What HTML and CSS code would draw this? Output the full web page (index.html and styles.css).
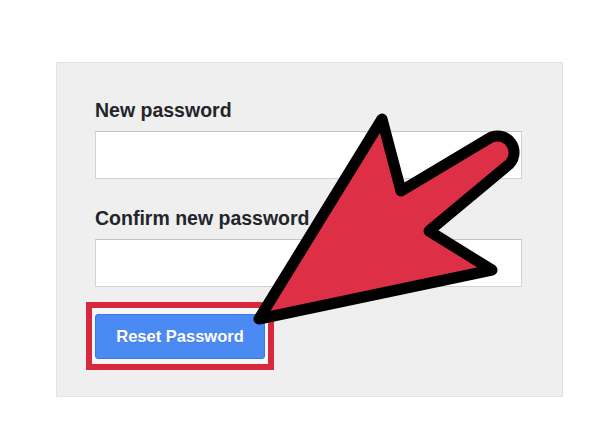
FILE: index.html
```html
<!DOCTYPE html>
<html lang="en">
<head>
    <meta charset="UTF-8">
    <meta name="viewport" content="width=device-width, initial-scale=1.0">
    <title>Reset Password</title>
    <link rel="stylesheet" href="styles.css">
</head>
<body>
    <div class="card">
        <label class="field-label" for="new_password">New password</label>
        <input class="field" type="password" id="new_password">

        <label class="field-label second" for="confirm_password">Confirm new password</label>
        <input class="field" type="password" id="confirm_password">

        <div class="highlight">
            <button class="btn">Reset Password</button>
        </div>
    </div>

    <!-- big pointer arrow drawn over the form -->
    <svg class="pointer" width="600" height="433" viewBox="0 0 600 433">
        <path d="M259 319 L382 119 L401 191 L488 139 A16 16 0 0 1 507 166 L429 231 L492 270 Z"
              fill="#dd2f46" stroke="#000" stroke-width="11" stroke-linejoin="round"/>
    </svg>
</body>
</html>
```
FILE: styles.css
```css
body {
    margin: 0;
    background: #fff;
    font-family: 'Liberation Sans', Arial, sans-serif;
    position: relative;
    width: 600px;
    height: 433px;
    overflow: hidden;
}

.card {
    box-sizing: border-box;
    width: 507px;
    height: 335px;
    margin: 62px 0 0 56px;
    padding: 35px 40px 25px 38px;
    background: #efefef;
    border: 1px solid #e2e2e2;
}

.field-label {
    display: block;
    font-size: 19.5px;
    line-height: 24px;
    font-weight: bold;
    color: #22252a;
    margin-bottom: 9px;
}

.field-label.second {
    margin-top: 27px;
}

.field {
    display: block;
    box-sizing: border-box;
    width: 427px;
    height: 48px;
    margin: 0;
    background: #fff;
    border: 1px solid #d2d2d2;
    border-top-color: #c4c4c4;
}

.highlight {
    width: fit-content;
    margin: 15px 0 0 -9px;
    padding: 6px 3px 5px 3px;
    border: 6px solid #d8283d;
    background: #f6f6f6;
}

.btn {
    display: block;
    box-sizing: border-box;
    width: 170px;
    height: 45px;
    padding: 0;
    background: #4a8af2;
    border: 1px solid #3b79e2;
    border-radius: 3px;
    color: #fff;
    font-family: 'Liberation Sans', Arial, sans-serif;
    font-size: 16.5px;
    font-weight: bold;
    text-shadow: 0 1px 0 rgba(0,0,0,0.1);
    cursor: pointer;
}

.pointer {
    position: absolute;
    top: 0;
    left: 0;
    pointer-events: none;
}
```
